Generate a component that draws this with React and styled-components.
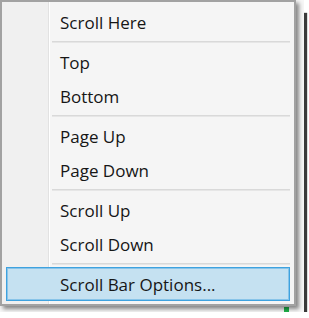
import React from "react";
import styled, { createGlobalStyle } from "styled-components";

const GlobalStyle = createGlobalStyle`
  html, body {
    margin: 0;
    padding: 0;
    background: #ffffff;
  }
  * {
    box-sizing: border-box;
  }
`;

/* the window that sits behind the popup, with the blog-style hard shadow */
const WindowFrame = styled.div`
  position: relative;
  width: 304px;
  height: 312px;
  background: #f6f6f6;
  box-shadow: 8px 8px 1px -5px #3a3a3a;
`;

const ScrollMarker = styled.div`
  position: absolute;
  left: 284px;
  top: 307px;
  width: 5px;
  height: 9px;
  background: #1fb34a;
  z-index: 2;
`;

const ContextMenu = styled.div`
  position: absolute;
  left: 0;
  top: 0;
  width: 296px;
  height: 306px;
  border: 2px solid #a2a2a2;
  box-shadow: 3px 3px 4px rgba(0, 0, 0, 0.45);
  background: linear-gradient(
    to right,
    #f0f0f0 0 46px,
    #e2e2e2 46px 47px,
    #ffffff 47px 48px,
    #f5f5f5 48px
  );
  display: flex;
  flex-direction: column;
  padding: 3px 0;
  font-family: "Open Sans", "Noto Sans", sans-serif;
  z-index: 3;
`;

const MenuItem = styled.div`
  height: 34px;
  margin: 0 4px;
  padding-left: 53px;
  display: flex;
  align-items: center;
  font-size: 17px;
  color: #161616;
  border: 1px solid ${(p) => (p.$active ? "#3ea2df" : "transparent")};
  background: ${(p) => (p.$active ? "#c5e1f1" : "transparent")};
  box-shadow: ${(p) =>
    p.$active ? "inset 0 0 0 1px rgba(62, 162, 223, 0.45)" : "none"};
`;

const Separator = styled.div`
  height: 2px;
  margin: 2px 4px 2px 50px;
  background: #d9d9d9;
  border-bottom: 1px solid #e6e6e6;
`;

const groups = [
  ["Scroll Here"],
  ["Top", "Bottom"],
  ["Page Up", "Page Down"],
  ["Scroll Up", "Scroll Down"],
  ["Scroll Bar Options..."],
];

export default function App() {
  return (
    <>
      <GlobalStyle />
      <WindowFrame>
        <ContextMenu>
          {groups.map((group, gi) => (
            <React.Fragment key={gi}>
              {gi > 0 && <Separator />}
              {group.map((label) => (
                <MenuItem key={label} $active={label === "Scroll Bar Options..."}>
                  {label}
                </MenuItem>
              ))}
            </React.Fragment>
          ))}
        </ContextMenu>
        <ScrollMarker />
      </WindowFrame>
    </>
  );
}
